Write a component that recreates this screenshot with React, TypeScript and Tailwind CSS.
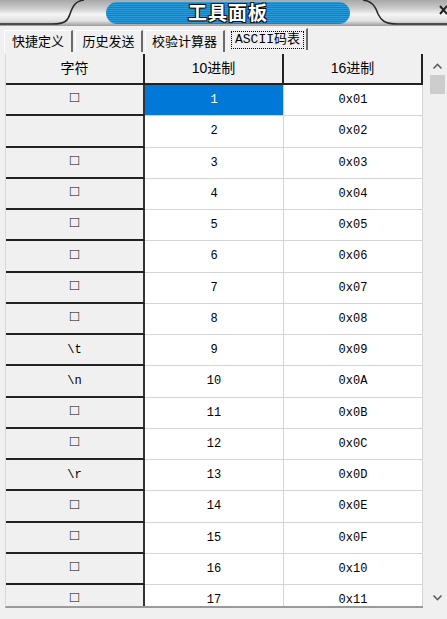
const cjk = "font-['Liberation_Sans','Noto_Sans_CJK_SC',sans-serif]"
const mono = "font-['Liberation_Mono','Noto_Sans_CJK_SC',monospace]"

const specialChars: Record<number, string> = { 2: '', 9: '\\t', 10: '\\n', 13: '\\r' }

const rows = Array.from({ length: 17 }, (_, i) => {
  const n = i + 1
  return {
    n,
    ch: n in specialChars ? specialChars[n] : '□',
    hex: '0x' + n.toString(16).toUpperCase().padStart(2, '0'),
  }
})

const tabs = [
  { label: '快捷定义', w: 'w-[69px]' },
  { label: '历史发送', w: 'w-[68px]' },
  { label: '校验计算器', w: 'w-[80px]' },
  { label: 'ASCII码表', w: 'w-[80px]' },
]

function TitleBar() {
  return (
    <div className="relative h-[26px] shrink-0 bg-[linear-gradient(to_bottom,#a8a8a8_0%,#c8c8c8_30%,#f4f4f4_55%,#e2e2e2_80%,#9a9a9a_100%)]">
      {/* curved shoulders of the skin */}
      <svg className="absolute inset-0" width="447" height="26" viewBox="0 0 447 26">
        <path d="M0 24 L52 24 C66 24 68 20 70 14 C73 5 76 1 84 0" fill="none" stroke="#2a2a2a" strokeWidth="1.6" />
        <path d="M447 24 L398 24 C384 24 381 20 378 14 C375 5 371 1 363 0" fill="none" stroke="#2a2a2a" strokeWidth="1.6" />
        <path d="M440 6 L447 14 M447 6 L440 14" stroke="#222" strokeWidth="2" />
      </svg>
      <div className="relative flex h-full justify-center pl-[9px] pt-[2px]">
        <div className="flex h-[22px] w-[244px] items-center justify-center rounded-full bg-[repeating-linear-gradient(to_bottom,#2b9ad8_0px,#2b9ad8_1px,#1a7fc0_1px,#1a7fc0_2px)]">
          <span className={`${cjk} text-[19px] font-bold leading-none tracking-[1px] text-white [text-shadow:1px_1px_0_#111,-1px_-1px_0_#111,1px_-1px_0_#111,-1px_1px_0_#111]`}>
            工具面板
          </span>
        </div>
      </div>
    </div>
  )
}

function Tabs() {
  return (
    <div className="flex h-[26px] shrink-0 items-end gap-[2px] pl-[4px]">
      {tabs.map((t, i) => {
        const active = i === 3
        return (
          <div
            key={t.label}
            className={`flex h-[22px] ${t.w} items-center justify-center border-l border-t border-r-2 border-l-white border-t-white border-r-[#6b6b6b] ${active ? 'mb-[2px] ml-[1px]' : ''}`}
          >
            <span
              className={`${active ? mono : cjk} px-[3px] text-[13px] leading-[16px] text-black ${active ? 'border border-dotted border-black' : 'border border-transparent'}`}
            >
              {t.label}
            </span>
          </div>
        )
      })}
    </div>
  )
}

export default function App() {
  return (
    <div className="flex h-[619px] w-[447px] flex-col overflow-hidden bg-[#f0f0f0]">
      <TitleBar />
      <Tabs />
      <div className="flex h-[556px] shrink-0 pl-[5px] pt-[2px]">
        <div className="h-full w-[418px] overflow-hidden border-b-2 border-b-[#9a9a9a] border-l border-l-[#d8d8d8]">
          <div className="grid grid-cols-[139px_139px_139px]">
            {['字符', '10进制', '16进制'].map((h) => (
              <div
                key={h}
                className={`${cjk} flex h-[31px] items-center justify-center border-b-2 border-r-2 border-b-[#222] border-r-[#222] bg-[#f0f0f0] text-[14px] text-black`}
              >
                {h}
              </div>
            ))}
            {rows.map((r) => (
              <div key={r.n} className="contents">
                <div
                  className={`${mono} flex h-[31.25px] items-center justify-center border-b-2 border-r-2 border-b-[#222] border-r-[#333] bg-[#f0f0f0] text-black ${
                    r.ch === '□' ? 'text-[15px]' : 'text-[12px]'
                  }`}
                >
                  {r.ch}
                </div>
                <div
                  className={`${mono} flex h-[31.25px] items-center justify-center border-b border-r border-[#d4d4d4] text-[12px] ${
                    r.n === 1 ? 'bg-[#0078d7] text-white' : 'bg-white text-black'
                  }`}
                >
                  {r.n}
                </div>
                <div
                  className={`${mono} flex h-[31.25px] items-center justify-center border-b border-r border-[#d4d4d4] bg-white text-[12px] text-black`}
                >
                  {r.hex}
                </div>
              </div>
            ))}
          </div>
        </div>
        <div className="ml-[6px] flex h-[554px] w-[17px] flex-col items-center bg-[#f0f0f0]">
          <svg width="17" height="17" viewBox="0 0 17 17" className="mt-[4px]">
            <path d="M4.5 10.5 L8.5 6.5 L12.5 10.5" fill="none" stroke="#606060" strokeWidth="1.6" />
          </svg>
          <div className="h-[19px] w-[15px] bg-[#cdcdcd]" />
          <div className="flex-1" />
          <svg width="17" height="17" viewBox="0 0 17 17" className="mb-[2px]">
            <path d="M4.5 6.5 L8.5 10.5 L12.5 6.5" fill="none" stroke="#606060" strokeWidth="1.6" />
          </svg>
        </div>
      </div>
    </div>
  )
}
